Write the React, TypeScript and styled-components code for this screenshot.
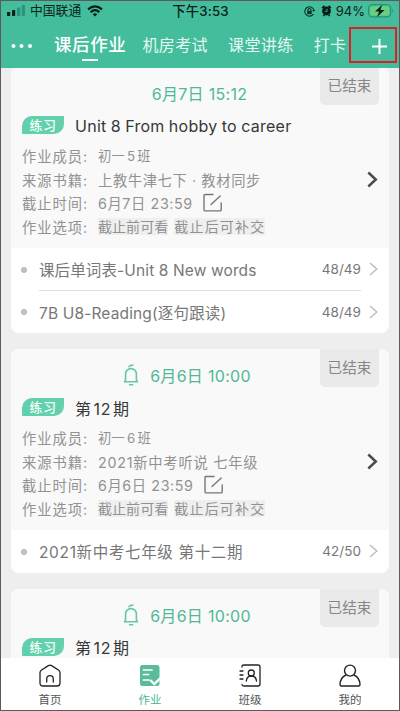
import React from "react";
import styled, { createGlobalStyle } from "styled-components";

const GlobalStyle = createGlobalStyle`
  * { box-sizing: border-box; }
  body { margin: 0; background: #fff; }
`;

const Screen = styled.div`
  width: 400px;
  height: 711px;
  border: 1px solid #62575a;
  background: #eeeeee;
  overflow: hidden;
  display: flex;
  flex-direction: column;
  font-family: Inter, "Noto Sans CJK SC", sans-serif;
  white-space: nowrap;
`;

const Header = styled.header`
  flex: none;
  height: 67px;
  background: #43bd9c;
`;

const StatusBar = styled.div`
  display: grid;
  grid-template-columns: 1fr auto 1fr;
  align-items: center;
  height: 20px;
  padding: 0 5px 0 6px;
  color: #0d211b;
  font-size: 12.8px;
  line-height: 20px;
`;

const StatusGroup = styled.div<{ $end?: boolean }>`
  display: flex;
  align-items: center;
  justify-content: ${(p) => (p.$end ? "flex-end" : "flex-start")};
`;

const Carrier = styled.span`
  margin: 0 6px 0 5px;
`;

const Clock = styled.span`
  font-size: 13.3px;
  font-weight: 500;
  letter-spacing: 0.2px;
`;

const Percent = styled.span`
  margin: 0 3px 0 4px;
  font-size: 13px;
`;

const StatusIcon = styled.svg<{ $gap?: number }>`
  margin-right: ${(p) => p.$gap ?? 0}px;
`;

const Nav = styled.nav`
  display: flex;
  align-items: center;
  height: 48px;
  padding-left: 9px;
`;

const NavTab = styled.div<{ $active?: boolean; $left: number }>`
  position: relative;
  margin-left: ${(p) => p.$left}px;
  font-size: ${(p) => (p.$active ? 17.5 : 16)}px;
  font-weight: ${(p) => (p.$active ? 500 : 400)};
  letter-spacing: ${(p) => (p.$active ? 0.6 : 0.4)}px;
  line-height: 26px;
  color: ${(p) => (p.$active ? "#fff" : "#e4f8f1")};
`;

const Underline = styled.i`
  position: absolute;
  left: 28px;
  bottom: -3px;
  width: 16px;
  height: 2px;
  background: #fff;
`;

const AddButton = styled.button`
  display: flex;
  align-items: center;
  justify-content: center;
  width: 48px;
  height: 36px;
  margin: 0 0 0 3px;
  padding: 3px 0 0 12px;
  border: 2px solid #dd2027;
  background: none;
`;

const Feed = styled.main`
  flex: 1;
  min-height: 0;
  overflow: hidden;
  display: flex;
  flex-direction: column;
  gap: 16px;
  padding: 0 10px;
`;

const Card = styled.section<{ $clipped?: boolean }>`
  flex: none;
  margin-top: ${(p) => (p.$clipped ? -1 : 0)}px;
  border-radius: 8px;
  background: #fff;
  overflow: hidden;
`;

const CardHead = styled.div`
  position: relative;
  height: 181px;
  padding: 14px 11px 0;
  background: #f9f9f9;
`;

const DateRow = styled.div`
  display: flex;
  align-items: center;
  justify-content: center;
  height: 24px;
  color: #50b898;
  font-size: 16px;
  letter-spacing: 0.3px;
`;

const DateBox = styled.div<{ $bell?: boolean }>`
  display: flex;
  align-items: center;
  gap: 11px;
  padding-right: ${(p) => (p.$bell ? 26 : 1)}px;
`;

const Ended = styled.div`
  position: absolute;
  top: 0;
  right: 10px;
  width: 59px;
  height: 38px;
  border-radius: 0 0 5px 5px;
  background: #eaeaea;
  color: #868686;
  font-size: 14.6px;
  line-height: 38px;
  text-align: center;
`;

const TitleRow = styled.div`
  display: flex;
  align-items: center;
  height: 40px;
`;

const Tag = styled.span`
  width: 42px;
  height: 18px;
  border-radius: 10px 1px 10px 1px;
  background: #62d0ad;
  color: #f4fffb;
  font-size: 13px;
  font-weight: 500;
  letter-spacing: 0.4px;
  line-height: 18px;
  text-align: center;
`;

const Title = styled.span<{ $spacing: number }>`
  margin: 1px 0 0 11px;
  color: #373737;
  font-size: 16px;
  letter-spacing: ${(p) => p.$spacing}px;
  word-spacing: -0.5px;
`;

const Num = styled.span`
  margin: 0 2px;
`;

const Meta = styled.div`
  display: flex;
  align-items: center;
  height: 23.5px;
  margin-top: -1px;
  margin-bottom: 1px;
  color: #929292;
  font-size: 14.3px;
`;

const Label = styled.span`
  width: 76px;
  letter-spacing: 0.95px;
`;

const Value = styled.span<{ $spacing?: number; $size?: number }>`
  font-size: ${(p) => p.$size ?? 14.3}px;
  letter-spacing: ${(p) => p.$spacing ?? 0.6}px;
`;

const Option = styled.span<{ $spacing: number }>`
  height: 17px;
  margin-right: 6px;
  background: #efefef;
  font-size: 14px;
  letter-spacing: ${(p) => p.$spacing}px;
  line-height: 17px;
`;

const EditIcon = styled.svg`
  margin-left: 10px;
`;

const HeadArrow = styled.svg`
  position: absolute;
  right: 11px;
  top: 104px;
`;

const Row = styled.div`
  display: flex;
  align-items: center;
  height: 42.5px;
  padding: 0 11px 0 10px;
  color: #777;
`;

const Bullet = styled.i`
  width: 6px;
  height: 6px;
  margin-top: 1px;
  border-radius: 50%;
  background: #bdbdbd;
`;

const RowBody = styled.div<{ $line?: boolean }>`
  flex: 1;
  display: flex;
  align-items: center;
  justify-content: space-between;
  height: 100%;
  margin: 0 8px 0 12px;
  border-bottom: ${(p) => (p.$line ? 1 : 0)}px solid #dedede;
`;

const RowText = styled.span<{ $spacing: number }>`
  font-size: 15.5px;
  letter-spacing: ${(p) => p.$spacing}px;
`;

const Count = styled.span`
  font-size: 13.5px;
  letter-spacing: 0.05px;
`;

const TabBar = styled.footer`
  flex: none;
  display: grid;
  grid-template-columns: repeat(4, 100px);
  height: 52px;
  margin-left: -1px;
  background: #fff;
`;

const Tab = styled.div<{ $active?: boolean }>`
  display: flex;
  flex-direction: column;
  align-items: center;
  padding-top: 6px;
  color: ${(p) => (p.$active ? "#50b498" : "#555")};
  font-size: 11.5px;
  line-height: 16px;
`;

const TabLabel = styled.span`
  margin-top: 5px;
`;

const Bell = () => (
  <svg width="16" height="22" viewBox="0 0 16 22" fill="none" stroke="#63c9a6" strokeWidth="1.6" strokeLinecap="round" strokeLinejoin="round">
    <path d="M6 2.6Q7.2 1.2 9.8 1.1M2.6 16V10a5.4 5.4 0 0 1 10.8 0v6l1.1 1.8h-13L2.6 16M6.5 20.7h3.2" />
  </svg>
);

const Edit = () => (
  <EditIcon width="19" height="19" viewBox="0 0 19 19" fill="none" stroke="#777" strokeWidth="1.4" strokeLinecap="round">
    <path d="M10 1.5H2.2Q1 1.5 1 2.7v14q0 1.2 1.2 1.2h15q1 0 1-1.2V10M8 11.5L17.2 3" />
  </EditIcon>
);

type Item = { text: string; count: string; spacing: number };
type Work = {
  date: string;
  bell?: boolean;
  title: React.ReactNode;
  titleSpacing: number;
  details?: { members: React.ReactNode; book: string; bookSpacing: number; deadline: string };
  items: Item[];
};

const works: Work[] = [
  {
    date: "6月7日 15:12",
    title: "Unit 8 From hobby to career",
    titleSpacing: 0.26,
    details: {
      members: <>初一<Num>5</Num>班</>,
      book: "上教牛津七下 · 教材同步",
      bookSpacing: 0.6,
      deadline: "6月7日 23:59",
    },
    items: [
      { text: "课后单词表-Unit 8 New words", count: "48/49", spacing: 0.12 },
      { text: "7B U8-Reading(逐句跟读)", count: "48/49", spacing: 0.15 },
    ],
  },
  {
    date: "6月6日 10:00",
    bell: true,
    title: <>第<Num>12</Num>期</>,
    titleSpacing: 0.6,
    details: {
      members: <>初一<Num>6</Num>班</>,
      book: "2021新中考听说 七年级",
      bookSpacing: 0.75,
      deadline: "6月6日 23:59",
    },
    items: [{ text: "2021新中考七年级 第十二期", count: "42/50", spacing: 0.65 }],
  },
  {
    date: "6月6日 10:00",
    bell: true,
    title: <>第<Num>12</Num>期</>,
    titleSpacing: 0.6,
    items: [],
  },
];

const WorkCard = ({ work, clipped }: { work: Work; clipped?: boolean }) => (
  <Card $clipped={clipped}>
    <CardHead>
      <DateRow>
        <DateBox $bell={work.bell}>
          {work.bell && <Bell />}
          {work.date}
        </DateBox>
      </DateRow>
      <Ended>已结束</Ended>
      <TitleRow>
        <Tag>练习</Tag>
        <Title $spacing={work.titleSpacing}>{work.title}</Title>
      </TitleRow>
      {work.details && (
        <>
          <Meta><Label>作业成员:</Label><Value $size={13.3} $spacing={0.2}>{work.details.members}</Value></Meta>
          <Meta><Label>来源书籍:</Label><Value $spacing={work.details.bookSpacing}>{work.details.book}</Value></Meta>
          <Meta><Label>截止时间:</Label><Value>{work.details.deadline}</Value><Edit /></Meta>
          <Meta>
            <Label>作业选项:</Label>
            <Option $spacing={0.05}>截止前可看</Option>
            <Option $spacing={1.2}>截止后可补交</Option>
          </Meta>
          <HeadArrow width="11" height="17" viewBox="0 0 11 17" fill="none" stroke="#4b4b4b" strokeWidth="2.5">
            <path d="M1.3 1.5L8.8 8.5L1.3 15.5" />
          </HeadArrow>
        </>
      )}
    </CardHead>
    {work.items.map((item, i) => (
      <Row key={item.text}>
        <Bullet />
        <RowBody $line={i < work.items.length - 1}>
          <RowText $spacing={item.spacing}>{item.text}</RowText>
          <Count>{item.count}</Count>
        </RowBody>
        <svg width="9" height="14" viewBox="0 0 9 14" fill="none" stroke="#bcbcbc" strokeWidth="1.4">
          <path d="M1 1l6.8 6L1 13" />
        </svg>
      </Row>
    ))}
  </Card>
);

const Status = () => (
  <StatusBar>
    <StatusGroup>
      <svg width="18" height="12" viewBox="0 0 18 12">
        <g fill="#071e17">
          <rect x="0" y="7" width="3.2" height="4" rx=".7" />
          <rect x="5" y="5" width="3.2" height="6" rx=".7" />
        </g>
        <g fill="#2b9379">
          <rect x="10" y="2.5" width="3.2" height="8.5" rx=".7" />
          <rect x="14.7" y="0" width="3.2" height="11" rx=".7" />
        </g>
      </svg>
      <Carrier>中国联通</Carrier>
      <svg width="16" height="12" viewBox="0 0 16 12" fill="none" stroke="#071e17" strokeWidth="2.1">
        <path d="M1 4.4Q8-1.8 15 4.4M3.6 7.2Q8 3.1 12.4 7.2" />
        <path d="M8 11.6L5.7 9.3Q8 7.4 10.3 9.3Z" fill="#071e17" stroke="none" />
      </svg>
    </StatusGroup>
    <Clock>下午3:53</Clock>
    <StatusGroup $end>
      <StatusIcon $gap={6} width="11" height="11" viewBox="0 0 11 11" fill="none" stroke="#0b3328" strokeWidth="1.1">
        <path d="M9.5 8A4.7 4.7 0 1 1 10.1 4.4M8.5 4.6h2.4M4 5V4a1.5 1.5 0 0 1 3 0v1" />
        <path d="M3.2 4.8h4.5v3.4H3.2z" fill="#0b3328" stroke="none" />
      </StatusIcon>
      <StatusIcon width="11" height="12" viewBox="0 0 11 12">
        <circle cx="5.5" cy="6" r="4.4" fill="#071e17" />
        <path d="M1.2 3.2L3.5 1M9.8 3.2L7.5 1M2.3 10.8l1-1M8.7 10.8l-1-1" stroke="#071e17" strokeWidth="1.8" />
        <path d="M6 3.7v2.6H3.8" fill="none" stroke="#43bd9c" strokeWidth=".9" />
      </StatusIcon>
      <Percent>94%</Percent>
      <svg width="26" height="14" viewBox="0 0 26 14">
        <rect x=".7" y=".7" width="22" height="12.2" rx="3.3" fill="none" stroke="#248b6d" strokeWidth="1" />
        <rect x="2.2" y="2.2" width="19" height="9.2" rx="2" fill="#68d080" />
        <path d="M24 4.8q1.6 2 0 4z" fill="#248b6d" />
        <path d="M14.3.8L7 7.5h4.1L9 13l7.6-7h-4.2z" fill="#071e17" />
      </svg>
    </StatusGroup>
  </StatusBar>
);

export default function App() {
  return (
    <Screen>
      <GlobalStyle />
      <Header>
        <Status />
        <Nav>
          <svg width="23" height="6" viewBox="0 0 23 6" fill="#fff">
            <circle cx="3.5" cy="4" r="2" />
            <circle cx="11.5" cy="4" r="2" />
            <circle cx="20" cy="4" r="2" />
          </svg>
          <NavTab $active $left={21}>课后作业<Underline /></NavTab>
          <NavTab $left={16}>机房考试</NavTab>
          <NavTab $left={20}>课堂讲练</NavTab>
          <NavTab $left={20}>打卡</NavTab>
          <AddButton>
            <svg width="15" height="15" viewBox="0 0 15 15" stroke="#fff" strokeWidth="2">
              <path d="M0 7.5h15M7.5 0v15" />
            </svg>
          </AddButton>
        </Nav>
      </Header>
      <Feed>
        {works.map((work, i) => (
          <WorkCard key={i} work={work} clipped={i === 0} />
        ))}
      </Feed>
      <TabBar>
        <Tab>
          <svg width="22" height="23" viewBox="0 0 22 23" fill="none" stroke="#222" strokeWidth="1.3" strokeLinejoin="round" strokeLinecap="round">
            <path d="M9.4 1.6Q11 .6 12.6 1.6L19.5 6Q21 7 21 8.6V19q0 3-3 3H4q-3 0-3-3V8.6Q1 7 2.5 6ZM7.7 18v-3a3.3 3.3 0 0 1 6.6 0v3" />
          </svg>
          <TabLabel>首页</TabLabel>
        </Tab>
        <Tab $active>
          <svg width="22" height="23" viewBox="0 0 22 23" fill="none">
            <rect x="1" y="1" width="19.5" height="21" rx="2.5" fill="#5bbb9b" />
            <path d="M4.5 6h8.5M4.5 10.5h5M4.5 16h5.5" stroke="#fff" strokeWidth="1.7" strokeLinecap="round" />
            <path d="M11.2 16l4 4L22 13.5" stroke="#fff" strokeWidth="2.4" />
          </svg>
          <TabLabel>作业</TabLabel>
        </Tab>
        <Tab>
          <svg width="22" height="23" viewBox="0 0 22 23" fill="none" stroke="#222" strokeWidth="1.3" strokeLinecap="round">
            <path d="M3 3V2.5Q3 1 5 1h14q2 0 2 2v17q0 2-2 2H5q-2 0-2-1.5M1 7h3M1 11h3M1 15h3M7.3 17q.4-5 5-5t5.2 5" />
            <circle cx="12.3" cy="9" r="3" />
          </svg>
          <TabLabel>班级</TabLabel>
        </Tab>
        <Tab>
          <svg width="22" height="23" viewBox="0 0 22 23" fill="none" stroke="#222" strokeWidth="1.4" strokeLinejoin="round">
            <circle cx="11" cy="6.6" r="5.5" />
            <path d="M7 11Q1 14 1 20.5Q1 22 2.5 22h17q1.5 0 1.5-1.5Q21 14 15 11" />
          </svg>
          <TabLabel>我的</TabLabel>
        </Tab>
      </TabBar>
    </Screen>
  );
}
